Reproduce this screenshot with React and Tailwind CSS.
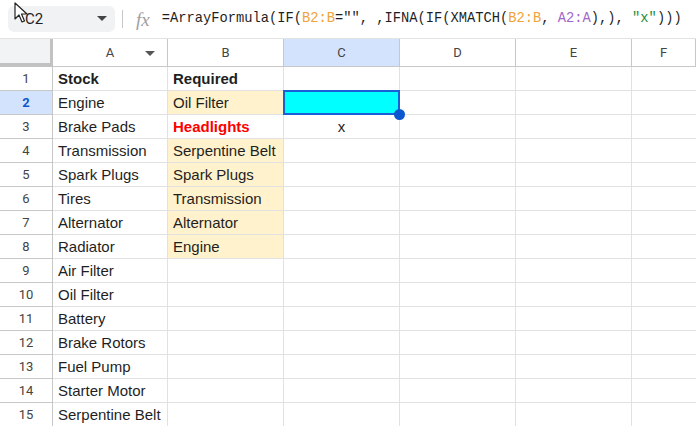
import React from "react";

const stock = [
  "Stock", "Engine", "Brake Pads", "Transmission", "Spark Plugs", "Tires", "Alternator",
  "Radiator", "Air Filter", "Oil Filter", "Battery", "Brake Rotors", "Fuel Pump",
  "Starter Motor", "Serpentine Belt",
];
const req = ["Required", "Oil Filter", "Headlights", "Serpentine Belt", "Spark Plugs", "Transmission", "Alternator", "Engine"];

function Cursor() {
  return (
    <svg className="absolute left-[14px] top-[2px]" width="14" height="22" viewBox="0 0 14 22">
      <path d="M1 1 L1 17 L5 13 L8 20 L10.5 19 L7.5 12 L13 12 Z" fill="white" stroke="#222" strokeWidth="1.2" strokeLinejoin="round" />
    </svg>
  );
}

export default function App() {
  const rows = Array.from({ length: 15 }, (_, i) => i + 1);
  return (
    <div className="relative w-[696px] h-[426px] overflow-hidden bg-white" style={{ fontFamily: "'Liberation Sans', Arial, sans-serif" }}>
      {/* formula bar */}
      <div className="flex items-center h-[39px] border-b border-[#e3e3e3] bg-white">
        <div className="ml-[8px] w-[107px] h-[26px] rounded-[6px] bg-[#f0f2f4] flex items-center pl-[17px] pr-[8px] justify-between">
          <span className="text-[15px] text-[#1f1f1f]" style={{ fontFamily: "Roboto, sans-serif" }}>C2</span>
          <svg width="10" height="6" viewBox="0 0 10 6"><path d="M0 0 L10 0 L5 5 Z" fill="#444" /></svg>
        </div>
        <div className="ml-[7px] w-px h-[18px] bg-[#c7c7c7]" />
        <span className="ml-[13px] text-[19px] italic text-[#a0a0a0] leading-none" style={{ fontFamily: "'Liberation Serif', serif" }}>fx</span>
        <span className="ml-[12px] text-[13.75px] text-[#1f1f1f] whitespace-pre" style={{ fontFamily: "'Liberation Mono', monospace" }}>
          =ArrayFormula(IF(<span className="text-[#f0a33a]">B2:B</span>="", ,IFNA(IF(XMATCH(<span className="text-[#f0a33a]">B2:B</span>, <span className="text-[#a066c8]">A2:A</span>),), <span className="text-[#1e8e3e]">"x"</span>)))
        </span>
      </div>
      <Cursor />

      {/* grid */}
      <div className="grid grid-cols-[53px_115px_116px_116px_116px_116px_1fr] grid-rows-[28px_repeat(15,24px)]">
        {/* header row */}
        <div className="bg-[#f1f3f4] border-r-[3px] border-b-[4px] border-[#c2c2c2]" />
        {["A", "B", "C", "D", "E", "F"].map((c) => (
          <div
            key={c}
            className={`relative flex items-center justify-center border-r border-b border-[#c7c7c7] text-[13px] text-[#444] ${c === "C" ? "bg-[#d3e3fd] text-[#0b57d0]" : "bg-white"}`}
            style={{ fontFamily: "Roboto, sans-serif" }}
          >
            {c}
            {c === "A" && (
              <svg className="absolute right-[12px] top-[12px]" width="10" height="6" viewBox="0 0 10 6"><path d="M0 0 L10 0 L5 5 Z" fill="#555" /></svg>
            )}
          </div>
        ))}
        {rows.map((r) => {
          const s = stock[r - 1];
          const q = req[r - 1];
          const isReqFill = r >= 2 && r <= 8 && r !== 3;
          return (
            <React.Fragment key={r}>
              <div
                className={`flex items-center justify-center border-r border-b border-[#c7c7c7] text-[13px] ${r === 2 ? "bg-[#d3e3fd] text-[#0b57d0] font-bold" : "bg-white text-[#444]"}`}
                style={{ fontFamily: "Roboto, sans-serif" }}
              >
                {r}
              </div>
              <div className={`flex items-center pl-[5px] pt-[2px] border-r border-b border-[#e1e1e1] text-[15px] text-[#1f1f1f] ${r === 1 ? "font-bold" : ""}`}>
                {s}
              </div>
              <div className={`flex items-center pl-[5px] pt-[2px] border-r border-b border-[#e1e1e1] text-[15px] whitespace-nowrap ${isReqFill ? "bg-[#fff2cc]" : ""} ${r === 1 ? "font-bold text-[#1f1f1f]" : r === 3 ? "font-bold text-[#ff0000]" : "text-[#1f1f1f]"}`}>
                {q || ""}
              </div>
              <div className={`relative flex items-center justify-center pt-[2px] border-r border-b border-[#e1e1e1] text-[15px] text-[#1f1f1f] ${r === 2 ? "z-10" : ""}`}>
                {r === 3 ? "x" : ""}
                {r === 2 && (
                  <div className="absolute -left-px -top-px right-[-1px] bottom-[-1px] bg-[#00ffff] border-2 border-[#1a5fd6]">
                    <div className="absolute right-[-7px] bottom-[-7px] w-[11px] h-[11px] rounded-full bg-[#0b57d0]" />
                  </div>
                )}
              </div>
              <div className="border-r border-b border-[#e1e1e1]" />
              <div className="border-r border-b border-[#e1e1e1]" />
              <div className="border-b border-[#e1e1e1]" />
            </React.Fragment>
          );
        })}
      </div>
    </div>
  );
}
